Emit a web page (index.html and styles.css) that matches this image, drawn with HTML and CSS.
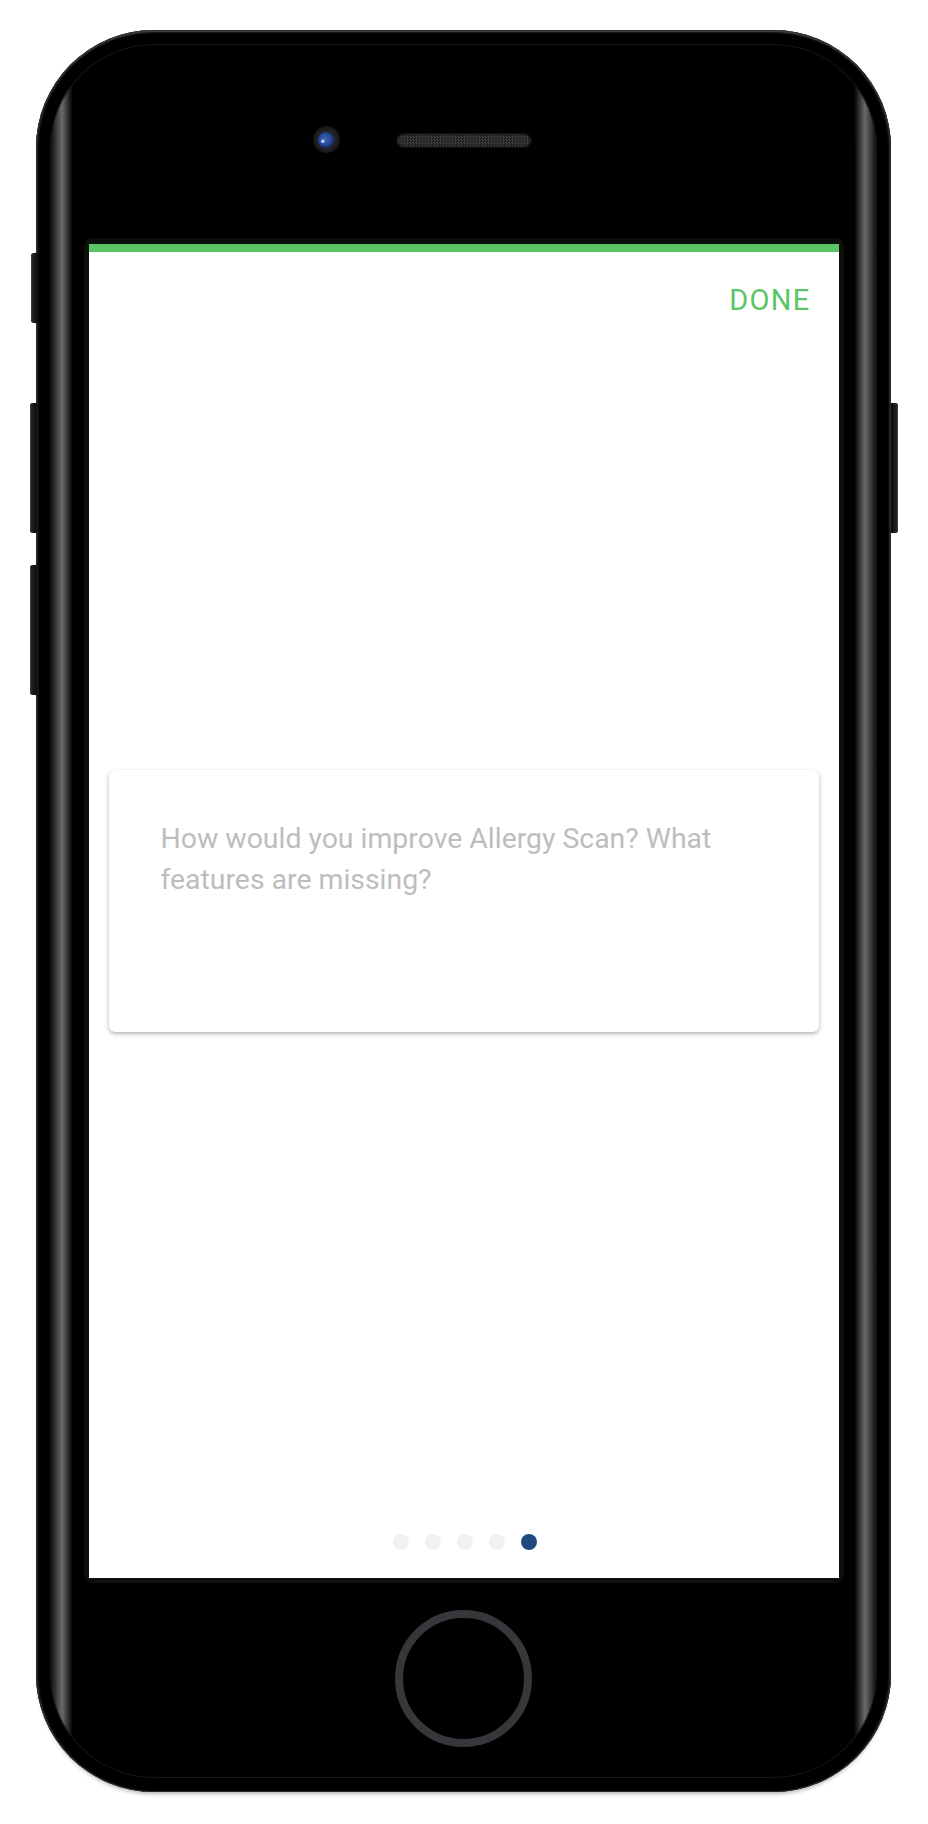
FILE: index.html
```html
<!DOCTYPE html>
<html lang="en">
<head>
<meta charset="utf-8">
<title>Allergy Scan feedback</title>
<link rel="stylesheet" href="styles.css">
</head>
<body>
<div class="phone">
  <span class="side-btn side-btn--mute"></span>
  <span class="side-btn side-btn--vol-up"></span>
  <span class="side-btn side-btn--vol-down"></span>
  <span class="side-btn side-btn--power"></span>
  <div class="bezel">
    <div class="face">
      <div class="sensors">
        <div class="camera"><div class="lens"></div></div>
        <div class="speaker"></div>
      </div>
      <div class="screen-frame">
        <div class="screen">
          <div class="progress"></div>
          <div class="header"><span class="done">DONE</span></div>
          <div class="main">
            <div class="card">
              <div class="placeholder">How would you improve Allergy Scan? What<br>features are missing?</div>
            </div>
          </div>
          <div class="footer">
            <span class="dot"></span>
            <span class="dot"></span>
            <span class="dot"></span>
            <span class="dot"></span>
            <span class="dot dot--active"></span>
          </div>
        </div>
      </div>
      <div class="home-btn"></div>
    </div>
  </div>
</div>
</body>
</html>
```
FILE: styles.css
```css
* { box-sizing: border-box; }

html, body {
  margin: 0;
  padding: 0;
  background: #fff;
  font-family: Roboto, "Liberation Sans", sans-serif;
}

body {
  width: 928px;
  height: 1824px;
  overflow: hidden;
}

.phone {
  position: relative;
  width: 855px;
  height: 1762px;
  margin: 30px 0 0 36px;
  padding: 14px;
  border-radius: 118px;
  background: #000;
  box-shadow:
    inset 0 0 0 1px #2c2c2c,
    inset 0 3px 2px -1px #575757,
    inset 3px 0 2px -1px #2a2a2a,
    inset -3px 0 2px -1px #2a2a2a,
    0 5px 4px -3px rgba(0, 0, 0, 0.3);
}

.side-btn {
  position: absolute;
  width: 7px;
  background: linear-gradient(to right, #2a2a2a, #161616 60%, #0c0c0c);
  border-radius: 3px 0 0 3px;
  box-shadow: inset 1px 0 0 #3a3a3a;
}
.side-btn--mute { left: -5px; top: 223px; height: 70px; }
.side-btn--vol-up { left: -6px; top: 373px; height: 130px; }
.side-btn--vol-down { left: -6px; top: 535px; height: 130px; }
.side-btn--power {
  right: -7px;
  top: 373px;
  height: 130px;
  border-radius: 0 3px 3px 0;
  background: linear-gradient(to left, #2a2a2a, #161616 60%, #0c0c0c);
  box-shadow: inset -1px 0 0 #3a3a3a;
}

.bezel {
  width: 100%;
  height: 100%;
  padding: 6px 22px;
  border-radius: 104px;
  background: linear-gradient(to right,
    #080808 0,
    #6a6a6a 12px,
    #080808 22px,
    #000 23px,
    #000 calc(100% - 23px),
    #080808 calc(100% - 22px),
    #6a6a6a calc(100% - 12px),
    #080808 100%);
  box-shadow: inset 0 0 0 1px #171717;
}

.face {
  width: 100%;
  height: 100%;
  border-radius: 98px;
  background: #000;
  display: flex;
  flex-direction: column;
  align-items: center;
}

.sensors {
  width: 100%;
  margin-top: 76px;
  display: grid;
  grid-template-columns: 1fr 134px 1fr;
  align-items: center;
}

.camera {
  justify-self: end;
  margin-right: 57px;
  width: 27px;
  height: 27px;
  border-radius: 50%;
  background: radial-gradient(circle, #222226 50%, #141416 72%, #0a0a0a);
  display: flex;
  align-items: center;
  justify-content: center;
}

.lens {
  width: 16px;
  height: 16px;
  border-radius: 50%;
  background:
    radial-gradient(circle at 30% 58%, #a9c4f0 0 1.5px, transparent 2.2px),
    radial-gradient(circle at 45% 45%, #3f66b0 0, #27489a 45%, #132a5e 75%, #0b1636 100%);
}

.speaker {
  width: 134px;
  height: 13px;
  margin-top: 2px;
  border-radius: 7px;
  background: repeating-conic-gradient(#3b3b3b 0 25%, #1c1c1c 0 50%) 0 0 / 3px 3px;
  box-shadow: 0 0 0 1px #111, inset 0 0 2px #000;
}

.screen-frame {
  margin-top: 85px;
  width: 760px;
  height: 1345px;
  padding: 6px 5px 5px;
  border-radius: 8px;
  background: #0e0e0e;
}

.screen {
  width: 750px;
  height: 1334px;
  background: #fff;
  display: flex;
  flex-direction: column;
}

.progress {
  height: 8px;
  flex: none;
  background: #5bc563;
}

.header {
  height: 100px;
  flex: none;
  padding: 34px 28px 0 0;
  text-align: right;
}

.done {
  display: inline-block;
  font-size: 29px;
  line-height: 29px;
  font-weight: 400;
  letter-spacing: 1.3px;
  color: #5bc563;
}

.main {
  flex: 1;
  padding: 418px 20px 0;
}

.card {
  height: 262px;
  padding: 48px 40px 0 52px;
  border-radius: 6px;
  background: #fff;
  box-shadow:
    0 2px 4px rgba(0, 0, 0, 0.28),
    0 0 2px rgba(0, 0, 0, 0.07);
}

.placeholder {
  font-size: 28.4px;
  line-height: 41px;
  color: #bdbdbd;
}

.footer {
  height: 100px;
  flex: none;
  padding-top: 56px;
  display: flex;
  justify-content: center;
  gap: 16px;
  padding-left: 2px;
}

.dot {
  width: 16px;
  height: 16px;
  border-radius: 50%;
  background: #f1f1f1;
}

.dot--active {
  background: #1f4a7f;
}

.home-btn {
  margin-top: 27px;
  width: 137px;
  height: 137px;
  border-radius: 50%;
  border: 8px solid #36373a;
  box-shadow: inset 0 0 2px #000, 0 0 2px #000;
}
```
